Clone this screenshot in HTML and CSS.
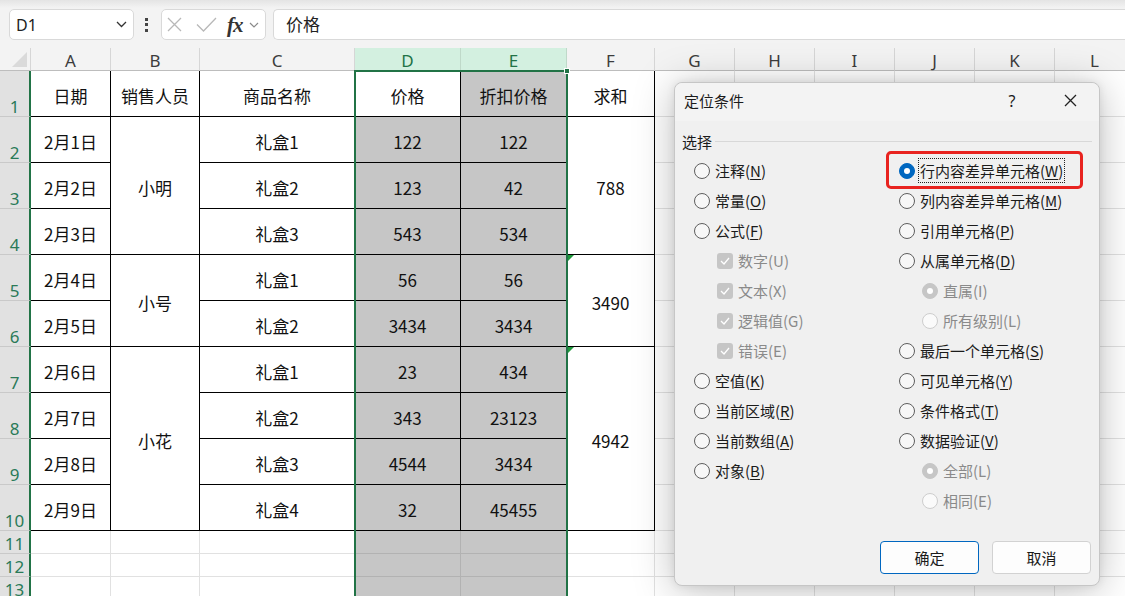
FILE: index.html
```html
<!DOCTYPE html>
<html lang="zh-CN">
<head>
<meta charset="utf-8">
<title>定位条件</title>
<link rel="stylesheet" href="styles.css">
</head>
<body>
<div class="app">
  <div class="fbar">
    <div class="namebox"><span class="ref">D1</span>
      <svg class="chev" width="11" height="7" viewBox="0 0 11 7"><path d="M1 1 L5.5 5.5 L10 1" fill="none" stroke="#333" stroke-width="1.3"/></svg>
    </div>
    <div class="vdots"><i></i><i></i><i></i></div>
    <div class="fxbox">
      <svg class="ico-x" width="15" height="15" viewBox="0 0 15 15"><path d="M1 1 L14 14 M14 1 L1 14" stroke="#b8b8b8" stroke-width="1.3" fill="none"/></svg>
      <svg class="ico-ok" width="21" height="15" viewBox="0 0 21 15"><path d="M1 7.5 L7.5 14 L20 1" stroke="#b8b8b8" stroke-width="1.3" fill="none"/></svg>
      <span class="fx">fx</span>
      <svg class="chev2" width="10" height="6" viewBox="0 0 10 6"><path d="M1 1 L5 5 L9 1" fill="none" stroke="#8a8a8a" stroke-width="1.2"/></svg>
    </div>
    <div class="finput">价格</div>
  </div>

  <div class="sheet">
    <div class="corner"></div>
    <div class="ch">A</div><div class="ch">B</div><div class="ch">C</div><div class="ch on">D</div><div class="ch on">E</div><div class="ch">F</div><div class="ch">G</div><div class="ch">H</div><div class="ch">I</div><div class="ch">J</div><div class="ch">K</div><div class="ch">L</div>

    <div class="rh">1</div>
    <div class="c b">日期</div><div class="c b">销售人员</div><div class="c b">商品名称</div><div class="c b">价格</div><div class="c b s">折扣价格</div><div class="c b">求和</div>
    <div class="c"></div><div class="c"></div><div class="c"></div><div class="c"></div><div class="c"></div><div class="c"></div>

    <div class="rh">2</div>
    <div class="c b">2月1日</div><div class="c b span3">小明</div><div class="c b">礼盒1</div><div class="c b s">122</div><div class="c b s">122</div><div class="c b span3">788</div>
    <div class="c"></div><div class="c"></div><div class="c"></div><div class="c"></div><div class="c"></div><div class="c"></div>

    <div class="rh">3</div>
    <div class="c b">2月2日</div><div class="c b">礼盒2</div><div class="c b s">123</div><div class="c b s">42</div>
    <div class="c"></div><div class="c"></div><div class="c"></div><div class="c"></div><div class="c"></div><div class="c"></div>

    <div class="rh">4</div>
    <div class="c b">2月3日</div><div class="c b">礼盒3</div><div class="c b s">543</div><div class="c b s">534</div>
    <div class="c"></div><div class="c"></div><div class="c"></div><div class="c"></div><div class="c"></div><div class="c"></div>

    <div class="rh">5</div>
    <div class="c b">2月4日</div><div class="c b span2">小号</div><div class="c b">礼盒1</div><div class="c b s">56</div><div class="c b s">56</div><div class="c b span2 tri">3490</div>
    <div class="c"></div><div class="c"></div><div class="c"></div><div class="c"></div><div class="c"></div><div class="c"></div>

    <div class="rh">6</div>
    <div class="c b">2月5日</div><div class="c b">礼盒2</div><div class="c b s">3434</div><div class="c b s">3434</div>
    <div class="c"></div><div class="c"></div><div class="c"></div><div class="c"></div><div class="c"></div><div class="c"></div>

    <div class="rh">7</div>
    <div class="c b">2月6日</div><div class="c b span4">小花</div><div class="c b">礼盒1</div><div class="c b s">23</div><div class="c b s">434</div><div class="c b span4 tri">4942</div>
    <div class="c"></div><div class="c"></div><div class="c"></div><div class="c"></div><div class="c"></div><div class="c"></div>

    <div class="rh">8</div>
    <div class="c b">2月7日</div><div class="c b">礼盒2</div><div class="c b s">343</div><div class="c b s">23123</div>
    <div class="c"></div><div class="c"></div><div class="c"></div><div class="c"></div><div class="c"></div><div class="c"></div>

    <div class="rh">9</div>
    <div class="c b">2月8日</div><div class="c b">礼盒3</div><div class="c b s">4544</div><div class="c b s">3434</div>
    <div class="c"></div><div class="c"></div><div class="c"></div><div class="c"></div><div class="c"></div><div class="c"></div>

    <div class="rh">10</div>
    <div class="c b">2月9日</div><div class="c b">礼盒4</div><div class="c b s">32</div><div class="c b s">45455</div>
    <div class="c"></div><div class="c"></div><div class="c"></div><div class="c"></div><div class="c"></div><div class="c"></div>

    <div class="rh">11</div>
    <div class="c"></div><div class="c"></div><div class="c"></div><div class="c s"></div><div class="c s"></div>
    <div class="c"></div><div class="c"></div><div class="c"></div><div class="c"></div><div class="c"></div><div class="c"></div><div class="c"></div>

    <div class="rh">12</div>
    <div class="c"></div><div class="c"></div><div class="c"></div><div class="c s"></div><div class="c s"></div>
    <div class="c"></div><div class="c"></div><div class="c"></div><div class="c"></div><div class="c"></div><div class="c"></div><div class="c"></div>

    <div class="rh">13</div>
    <div class="c"></div><div class="c"></div><div class="c"></div><div class="c s"></div><div class="c s"></div>
    <div class="c"></div><div class="c"></div><div class="c"></div><div class="c"></div><div class="c"></div><div class="c"></div><div class="c"></div>

    <div class="sel"></div>
    <div class="handle"></div>
  </div>

  <div class="dialog">
    <div class="dtitle">
      <span class="dname">定位条件</span>
      <span class="help">?</span>
      <span class="close"><svg width="13" height="13" viewBox="0 0 13 13"><path d="M1 1 L12 12 M12 1 L1 12" stroke="#222" stroke-width="1.3" fill="none"/></svg></span>
    </div>
    <div class="dbody">
      <div class="group"><span class="glabel">选择</span><span class="gline"></span></div>
      <div class="opts">
        <div class="col col1">
          <div class="opt"><span class="rd"></span><span>注释(<u>N</u>)</span></div>
          <div class="opt"><span class="rd"></span><span>常量(<u>O</u>)</span></div>
          <div class="opt"><span class="rd"></span><span>公式(<u>F</u>)</span></div>
          <div class="opt sub dis"><span class="chk"><svg width="10" height="8" viewBox="0 0 10 8"><path d="M1 4 L4 7 L9 1" stroke="#fff" stroke-width="1.3" fill="none"/></svg></span><span>数字(U)</span></div>
          <div class="opt sub dis"><span class="chk"><svg width="10" height="8" viewBox="0 0 10 8"><path d="M1 4 L4 7 L9 1" stroke="#fff" stroke-width="1.3" fill="none"/></svg></span><span>文本(X)</span></div>
          <div class="opt sub dis"><span class="chk"><svg width="10" height="8" viewBox="0 0 10 8"><path d="M1 4 L4 7 L9 1" stroke="#fff" stroke-width="1.3" fill="none"/></svg></span><span>逻辑值(G)</span></div>
          <div class="opt sub dis"><span class="chk"><svg width="10" height="8" viewBox="0 0 10 8"><path d="M1 4 L4 7 L9 1" stroke="#fff" stroke-width="1.3" fill="none"/></svg></span><span>错误(E)</span></div>
          <div class="opt"><span class="rd"></span><span>空值(<u>K</u>)</span></div>
          <div class="opt"><span class="rd"></span><span>当前区域(<u>R</u>)</span></div>
          <div class="opt"><span class="rd"></span><span>当前数组(<u>A</u>)</span></div>
          <div class="opt"><span class="rd"></span><span>对象(<u>B</u>)</span></div>
        </div>
        <div class="col col2">
          <div class="opt"><span class="hl"></span><span class="rd on"></span><span class="focus">行内容差异单元格(<u>W</u>)</span></div>
          <div class="opt"><span class="rd"></span><span>列内容差异单元格(<u>M</u>)</span></div>
          <div class="opt"><span class="rd"></span><span>引用单元格(<u>P</u>)</span></div>
          <div class="opt"><span class="rd"></span><span>从属单元格(<u>D</u>)</span></div>
          <div class="opt sub dis"><span class="rd dison"></span><span>直属(I)</span></div>
          <div class="opt sub dis"><span class="rd disoff"></span><span>所有级别(L)</span></div>
          <div class="opt"><span class="rd"></span><span>最后一个单元格(<u>S</u>)</span></div>
          <div class="opt"><span class="rd"></span><span>可见单元格(<u>Y</u>)</span></div>
          <div class="opt"><span class="rd"></span><span>条件格式(<u>T</u>)</span></div>
          <div class="opt"><span class="rd"></span><span>数据验证(<u>V</u>)</span></div>
          <div class="opt sub dis"><span class="rd dison"></span><span>全部(L)</span></div>
          <div class="opt sub dis"><span class="rd disoff"></span><span>相同(E)</span></div>
        </div>
      </div>
      <div class="btns">
        <button class="btn primary">确定</button>
        <button class="btn">取消</button>
      </div>
    </div>
  </div>
</div>
</body>
</html>
```

FILE: styles.css
```css
* { box-sizing: border-box; }

body {
  margin: 0;
  width: 1125px;
  height: 596px;
  overflow: hidden;
  background: #fff;
  font-family: "Noto Sans CJK SC", "Noto Sans", sans-serif;
  color: #000;
}

.app {
  position: relative;
  width: 1125px;
  height: 596px;
  overflow: hidden;
}

/* ---------- formula bar ---------- */
.fbar {
  height: 48px;
  display: flex;
  align-items: flex-start;
  padding-top: 9px;
  background: linear-gradient(#e4e4e4 0, #f3f3f3 8px, #f3f3f3 100%);
}

.namebox {
  margin-left: 9px;
  width: 125px;
  height: 31px;
  background: #fff;
  border: 1px solid #d9d9d9;
  border-radius: 5px;
  display: flex;
  align-items: center;
  justify-content: space-between;
  padding: 0 6px 0 6px;
}

.ref {
  font-family: "Noto Sans", sans-serif;
  font-size: 16px;
  color: #222;
}

.vdots {
  width: 25px;
  height: 31px;
  display: flex;
  flex-direction: column;
  align-items: center;
  justify-content: center;
  gap: 2.5px;
}

.vdots i {
  width: 3px;
  height: 3px;
  background: #444;
}

.fxbox {
  margin-left: 2px;
  width: 105px;
  height: 31px;
  background: #fff;
  border: 1px solid #d9d9d9;
  border-radius: 5px;
  display: flex;
  align-items: center;
  padding-left: 5px;
}

.ico-ok { margin-left: 14px; }

.fx {
  margin-left: 10px;
  font-family: "Liberation Serif", serif;
  font-style: italic;
  font-weight: bold;
  font-size: 21px;
  line-height: 20px;
  color: #333;
  letter-spacing: -1px;
}

.chev2 { margin-left: 6px; }

.finput {
  margin-left: 7px;
  flex: 1;
  height: 31px;
  background: #fff;
  border: 1px solid #d9d9d9;
  border-right: none;
  border-radius: 5px 0 0 5px;
  padding-left: 12px;
  font-size: 17px;
  line-height: 28px;
  color: #222;
}

/* ---------- sheet ---------- */
.sheet {
  position: relative;
  display: grid;
  grid-template-columns: 31px 80px 89px 155px 106px 106px 88px 80px 80px 80px 80px 80px 80px;
  grid-template-rows: 23px repeat(10, 46px) repeat(3, 23px);
  height: 548px;
  overflow: hidden;
}

.corner {
  position: relative;
  background: #f3f3f3;
  border-right: 1px solid #d6d6d6;
  border-bottom: 1px solid #bdbdbd;
}

.corner::after {
  content: "";
  position: absolute;
  right: 3px;
  bottom: 3px;
  border-left: 15px solid transparent;
  border-bottom: 15px solid #dadada;
}

.ch {
  background: #f3f3f3;
  border-right: 1px solid #d6d6d6;
  border-bottom: 1px solid #bdbdbd;
  display: flex;
  align-items: center;
  justify-content: center;
  padding-top: 3px;
  font-family: "Noto Sans", sans-serif;
  font-size: 17px;
  color: #3c3c3c;
}

.ch.on {
  background: #d3f0e0;
  color: #217346;
  border-right-color: #bfd9c9;
}

.rh {
  background: #e1e1e1;
  border-right: 2px solid #217346;
  border-bottom: 1px solid #c9c9c9;
  display: flex;
  align-items: flex-end;
  justify-content: center;
  font-family: "Noto Sans", sans-serif;
  font-size: 17px;
  line-height: 19px;
  color: #2a7a58;
}

.c {
  position: relative;
  border-right: 1px solid #e1e1e1;
  border-bottom: 1px solid #e1e1e1;
  display: flex;
  align-items: center;
  justify-content: center;
  padding-top: 4px;
  font-size: 17px;
  color: #111;
}

.c.b {
  border-right-color: #000;
  border-bottom-color: #000;
}

.c.s {
  background: #c6c6c6;
  border-right-color: #b2b2b2;
  border-bottom-color: #b2b2b2;
}

.c.b.s {
  border-right-color: #000;
  border-bottom-color: #000;
}

.span2 { grid-row: span 2; }
.span3 { grid-row: span 3; }
.span4 { grid-row: span 4; }

.tri::before {
  content: "";
  position: absolute;
  left: 0;
  top: 0;
  border-top: 7px solid #1f9a3c;
  border-right: 7px solid transparent;
}

.sel {
  position: absolute;
  left: 354px;
  top: 22px;
  width: 214px;
  bottom: -4px;
  border: 2px solid #217346;
  border-bottom: none;
  pointer-events: none;
}

.handle {
  position: absolute;
  left: 564px;
  top: 20px;
  width: 6px;
  height: 6px;
  background: #217346;
  border: 1px solid #fff;
}

/* ---------- dialog ---------- */
.dialog {
  position: absolute;
  left: 674px;
  top: 82px;
  width: 426px;
  height: 504px;
  background: #f0f0f0;
  border: 1px solid #c6c6c6;
  border-radius: 8px;
  box-shadow: 0 4px 40px rgba(0, 0, 0, 0.26), 0 0 8px rgba(0, 0, 0, 0.08);
  display: flex;
  flex-direction: column;
  font-family: "Noto Sans CJK SC", "Noto Sans", sans-serif;
  font-size: 15px;
  color: #1b1b1b;
}

.dtitle {
  height: 38px;
  display: flex;
  align-items: center;
  padding-left: 9px;
  padding-bottom: 3px;
  background: #f3f3f3;
  border-radius: 8px 8px 0 0;
}

.dname { flex: 1; }

.help {
  width: 30px;
  text-align: center;
  margin-right: 14px;
  font-family: "Noto Sans", sans-serif;
  font-size: 16px;
}

.close {
  width: 58px;
  display: flex;
  justify-content: center;
  align-items: center;
}

.dbody {
  flex: 1;
  display: flex;
  flex-direction: column;
  padding: 0 7px 11px 7px;
}

.group {
  display: flex;
  align-items: center;
  height: 22px;
  margin-top: 9px;
  margin-bottom: 4px;
}

.glabel { width: 30px; }

.gline {
  flex: 1;
  height: 1px;
  background: #d8d8d8;
  margin-left: 3px;
  margin-top: 0;
}

.opts {
  display: flex;
  padding-left: 12px;
}

.col { display: flex; flex-direction: column; }
.col1 { width: 205px; }
.col2 { flex: 1; }

.opt {
  position: relative;
  height: 30px;
  display: flex;
  align-items: center;
  gap: 5px;
  white-space: nowrap;
}

.opt > span:last-child {
  position: relative;
  top: -1px;
}

.opt u {
  text-decoration: underline;
  text-underline-offset: 2px;
  text-decoration-thickness: 1px;
}

.opt.sub { padding-left: 23px; }
.opt.dis { color: #8a8a8a; }

.rd {
  position: relative;
  flex: none;
  width: 16px;
  height: 16px;
  border-radius: 50%;
  border: 1px solid #5e5e5e;
  background: #f7f7f7;
}

.rd.on {
  background: #0067c0;
  border-color: #0067c0;
}

.rd.on::after,
.rd.dison::after {
  content: "";
  position: absolute;
  left: 4px;
  top: 4px;
  width: 6px;
  height: 6px;
  border-radius: 50%;
  background: #fff;
}

.rd.dison {
  background: #c6c6c6;
  border-color: #c6c6c6;
}

.rd.disoff {
  background: #fafafa;
  border-color: #cdcdcd;
}

.chk {
  flex: none;
  width: 16px;
  height: 16px;
  border-radius: 3px;
  background: #c6c6c6;
  display: flex;
  align-items: center;
  justify-content: center;
}

.focus {
  outline: 1px dotted #222;
  outline-offset: 1px;
}

.hl {
  position: absolute;
  left: -13px;
  top: -5px;
  width: 197px;
  height: 38px;
  border: 3px solid #e8231f;
  border-radius: 5px;
}

.btns {
  margin-top: auto;
  display: flex;
  justify-content: flex-end;
  gap: 13px;
  padding-right: 1px;
}

.btn {
  width: 99px;
  height: 33px;
  background: #fdfdfd;
  border: 1px solid #d2d2d2;
  border-radius: 4px;
  font-family: "Noto Sans CJK SC", "Noto Sans", sans-serif;
  font-size: 15px;
  color: #1b1b1b;
  padding: 0;
}

.btn.primary {
  border-color: #0067c0;
}
```
